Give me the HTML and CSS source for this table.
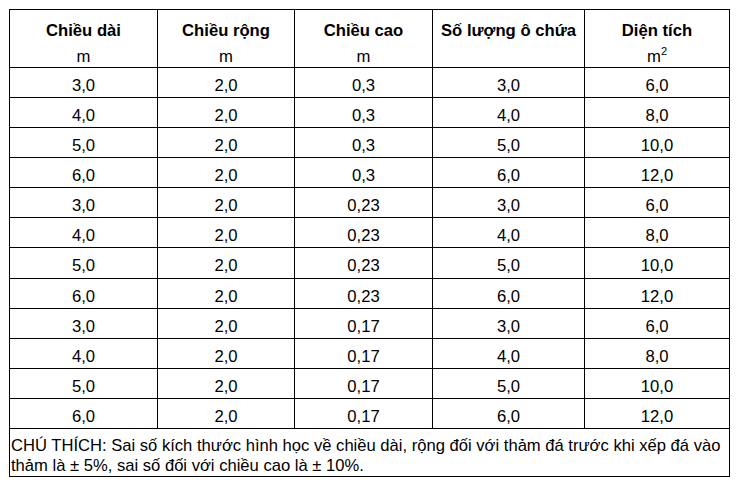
FILE: index.html
```html
<!DOCTYPE html>
<html lang="vi">
<head>
<meta charset="utf-8">
<link rel="stylesheet" href="styles.css">
</head>
<body>
<table class="tbl">
  <colgroup>
    <col class="c1"><col class="c2"><col class="c3"><col class="c4"><col class="c5">
  </colgroup>
  <thead>
    <tr class="head">
      <th><div class="h">Chiều dài</div><div class="u">m</div></th>
      <th><div class="h">Chiều rộng</div><div class="u">m</div></th>
      <th><div class="h">Chiều cao</div><div class="u">m</div></th>
      <th><div class="h">Số lượng ô chứa</div><div class="u">&nbsp;</div></th>
      <th><div class="h">Diện tích</div><div class="u">m<sup>2</sup></div></th>
    </tr>
  </thead>
  <tbody>
    <tr><td>3,0</td><td>2,0</td><td>0,3</td><td>3,0</td><td>6,0</td></tr>
    <tr><td>4,0</td><td>2,0</td><td>0,3</td><td>4,0</td><td>8,0</td></tr>
    <tr><td>5,0</td><td>2,0</td><td>0,3</td><td>5,0</td><td>10,0</td></tr>
    <tr><td>6,0</td><td>2,0</td><td>0,3</td><td>6,0</td><td>12,0</td></tr>
    <tr><td>3,0</td><td>2,0</td><td>0,23</td><td>3,0</td><td>6,0</td></tr>
    <tr><td>4,0</td><td>2,0</td><td>0,23</td><td>4,0</td><td>8,0</td></tr>
    <tr><td>5,0</td><td>2,0</td><td>0,23</td><td>5,0</td><td>10,0</td></tr>
    <tr><td>6,0</td><td>2,0</td><td>0,23</td><td>6,0</td><td>12,0</td></tr>
    <tr><td>3,0</td><td>2,0</td><td>0,17</td><td>3,0</td><td>6,0</td></tr>
    <tr><td>4,0</td><td>2,0</td><td>0,17</td><td>4,0</td><td>8,0</td></tr>
    <tr><td>5,0</td><td>2,0</td><td>0,17</td><td>5,0</td><td>10,0</td></tr>
    <tr><td>6,0</td><td>2,0</td><td>0,17</td><td>6,0</td><td>12,0</td></tr>
    <tr class="note"><td colspan="5">CHÚ THÍCH: Sai số kích thước hình học về chiều dài, rộng đối với thảm đá trước khi xếp đá vào thảm là ± 5%, sai số đối với chiều cao là ± 10%.</td></tr>
  </tbody>
</table>
</body>
</html>
```

FILE: styles.css
```css
html, body {
  background: #ffffff;
}
body {
  margin: 9px;
  font-family: "Liberation Sans", Arial, sans-serif;
  color: #000000;
}
.tbl {
  border-collapse: collapse;
  table-layout: fixed;
  width: 720px;
}
.c1 { width: 148px; }
.c2 { width: 137px; }
.c3 { width: 138px; }
.c4 { width: 152px; }
.c5 { width: 145px; }
.tbl th, .tbl td {
  border: 1px solid #000000;
  padding: 0;
  text-align: center;
  vertical-align: middle;
  font-size: 16.67px;
}
.head th {
  height: 58px;
  vertical-align: top;
  padding-top: 8px;
  box-sizing: border-box;
}
.h {
  font-weight: bold;
  line-height: 26px;
}
.u {
  font-weight: normal;
  line-height: 20px;
  margin-top: 3px;
}
.u sup {
  font-size: 11px;
  line-height: 0;
  vertical-align: 7px;
}
.tbl tbody td {
  height: 21.08px;
  vertical-align: top;
  padding-top: 8px;
  line-height: 19px;
}
.tbl .note td {
  height: 47px;
  box-sizing: border-box;
  vertical-align: top;
  text-align: left;
  font-size: 16.6px;
  line-height: 20px;
  padding: 7px 0 0 1px;
}
```
